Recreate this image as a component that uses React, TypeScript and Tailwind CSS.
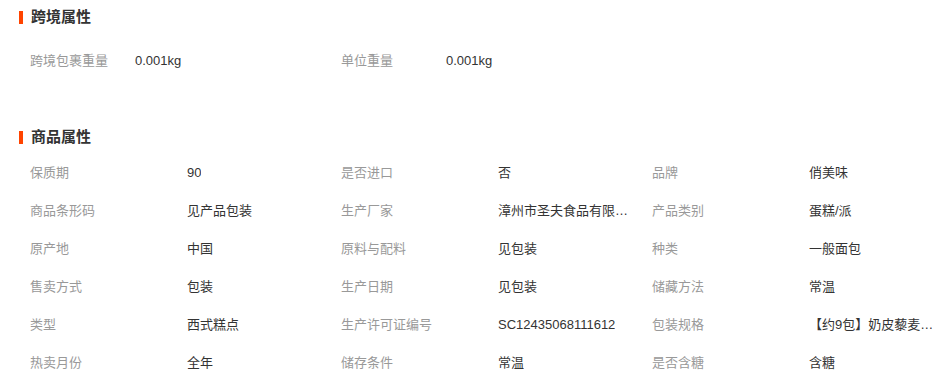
type Attr = { label: string; value: string };

const crossBorder: Attr[] = [
  { label: "跨境包裹重量", value: "0.001kg" },
  { label: "单位重量", value: "0.001kg" },
];

const goods: Attr[] = [
  { label: "保质期", value: "90" },
  { label: "是否进口", value: "否" },
  { label: "品牌", value: "俏美味" },
  { label: "商品条形码", value: "见产品包装" },
  { label: "生产厂家", value: "漳州市圣夫食品有限公司" },
  { label: "产品类别", value: "蛋糕/派" },
  { label: "原产地", value: "中国" },
  { label: "原料与配料", value: "见包装" },
  { label: "种类", value: "一般面包" },
  { label: "售卖方式", value: "包装" },
  { label: "生产日期", value: "见包装" },
  { label: "储藏方法", value: "常温" },
  { label: "类型", value: "西式糕点" },
  { label: "生产许可证编号", value: "SC12435068111612" },
  { label: "包装规格", value: "【约9包】奶皮藜麦酸奶面包" },
  { label: "热卖月份", value: "全年" },
  { label: "储存条件", value: "常温" },
  { label: "是否含糖", value: "含糖" },
];

function Title({ text }: { text: string }) {
  return (
    <div className="flex h-5 items-center">
      <span className="h-[13px] w-[4px] bg-[#ff4400]" />
      <h2 className="ml-[8px] text-[15px] font-bold leading-5 text-[#333]">{text}</h2>
    </div>
  );
}

function Cell({ a, labelW }: { a: Attr; labelW: string }) {
  return (
    <div className="flex h-[38px] w-[311px] items-center text-[13px]">
      <span className={`${labelW} shrink-0 text-[#999]`}>{a.label}</span>
      <span className="max-w-[137px] truncate text-[#333]">{a.value}</span>
    </div>
  );
}

export default function App() {
  return (
    <div
      className="h-[382px] w-[948px] overflow-hidden bg-white pl-[19px] pt-[7px]"
      style={{ fontFamily: '"Liberation Sans", "Noto Sans CJK SC", sans-serif' }}
    >
      <Title text="跨境属性" />
      <div className="mt-[15px] flex pl-[11px]">
        <Cell a={crossBorder[0]} labelW="w-[105px]" />
        <Cell a={crossBorder[1]} labelW="w-[105px]" />
      </div>

      <div className="mt-[47px]">
        <Title text="商品属性" />
      </div>
      <div className="mt-[7px] grid grid-cols-[311px_311px_311px] pl-[11px]">
        {goods.map((a) => (
          <Cell key={a.label} a={a} labelW="w-[157px]" />
        ))}
      </div>
    </div>
  );
}
